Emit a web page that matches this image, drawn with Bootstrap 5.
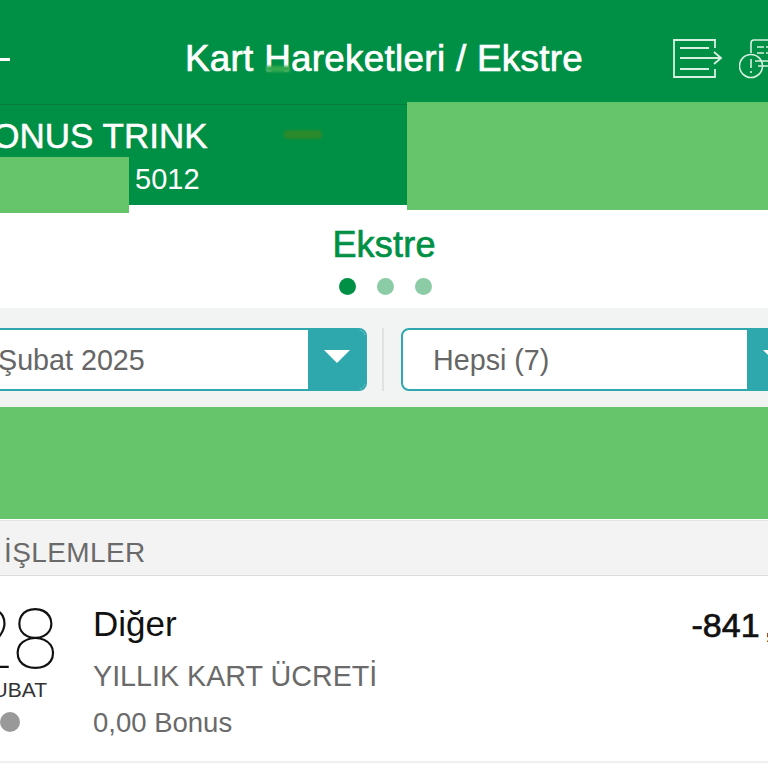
<!DOCTYPE html>
<html lang="tr">
<head>
<meta charset="utf-8">
<title>Kart Hareketleri / Ekstre</title>
<link href="https://cdn.jsdelivr.net/npm/bootstrap@5.3.0/dist/css/bootstrap.min.css" rel="stylesheet">
<style>
html,body{margin:0;height:768px;overflow:hidden;background:#fff;}
body{font-family:"Liberation Sans",Arial,sans-serif;color:#666;position:relative;width:768px;}
.topbar{height:105px;background:#009045;color:#fff;border-bottom:1px solid #0a7a3d;display:grid;grid-template-columns:1fr auto 1fr;align-items:center;padding-top:15px;}
.back-bar{width:10px;height:3px;background:#fff;display:block;}
.page-title{font-size:36.8px;line-height:1;-webkit-text-stroke:.7px #fff;letter-spacing:.3px;}
.top-icons{justify-content:flex-end;gap:16px;overflow:hidden;margin-top:-2px;}
.top-icons svg{flex:none;display:block;}
.cardband{height:100px;background:#009045;color:#fff;overflow:hidden;padding-top:10px;}
.cardname{font-size:35px;line-height:42px;margin-left:-31px;white-space:nowrap;-webkit-text-stroke:.5px #fff;}
.cardno{font-size:29px;line-height:34px;margin-left:135px;margin-top:5px;}
.redact{position:absolute;background:#66c56a;}
.r-a{left:407px;top:102px;width:361px;height:108px;}
.r-b{left:0;top:157px;width:129px;height:56px;}
.smudge{position:absolute;left:284px;top:130px;width:38px;height:9px;background:#2a8a2c;border-radius:4px;filter:blur(1px);}
.smudge-t{position:absolute;left:266px;top:66px;width:24px;height:6px;background:#35a94f;filter:blur(1px);}
.pager{height:103px;background:#fff;}
.pager-title{font-size:36px;line-height:38px;color:#009045;padding-top:21px;-webkit-text-stroke:.7px #009045;height:59px;letter-spacing:.2px;}
.pdots{gap:21px;margin-top:14px;padding-left:3px;}
.pdot{width:17px;height:17px;border-radius:50%;background:#8bcca7;}
.pdot.on{background:#009045;}
.filters{height:99px;background:#f2f3f3;align-items:flex-start;padding-top:20px;}
.picker{height:63px;border:2px solid #2fa8ad;border-radius:8px;background:#fff;overflow:hidden;font-size:28.7px;color:#666;flex:none;}
.p-left{width:368px;margin-left:-1px;border-left:0;border-top-left-radius:0;border-bottom-left-radius:0;}
.p-right{width:405px;}
.p-label{flex:1;padding:2px 0 0 30px;white-space:nowrap;}
.p-left .p-label{padding-left:0;margin-left:-1px;}
.p-caret{width:57px;background:#2fa8ad;flex:none;}
.p-caret i{display:block;width:0;height:0;border-left:13px solid transparent;border-right:13px solid transparent;border-top:13px solid #fff;margin-top:-6px;}
.sepline{width:2px;height:63px;background:#e0e1e2;margin:0 17px 0 15px;flex:none;}
.promo{height:112px;background:#66c56a;}
.sect{height:56px;background:#f3f3f3;border-top:1px solid #e4e4e4;border-bottom:1px solid #dcdcdc;font-size:28px;padding:9px 0 0 4px;letter-spacing:.4px;align-items:center;color:#6a6a6a;margin-top:1px;}
.txrow{height:187px;background:#fff;border-bottom:2px solid #f0f0f0;white-space:nowrap;overflow:hidden;}
.txdate{width:93px;flex:none;position:relative;overflow:hidden;}
.day{font-family:Roboto,"Liberation Sans",sans-serif;font-weight:100;font-size:83px;line-height:76px;color:#111;margin-top:26px;margin-right:35px;text-align:right;margin-left:-70px;}
.mon{font-size:21px;line-height:24px;color:#333;text-align:right;margin-right:46px;margin-left:-60px;}
.gdot{width:20px;height:20px;border-radius:50%;background:#999;margin-top:10px;}
.txmain{flex:1;padding-top:28px;}
.t1{font-size:35px;line-height:40px;color:#111;}
.t2{font-size:28.7px;line-height:32px;margin-top:16px;color:#6a6a6a;}
.t3{font-size:27.5px;line-height:30px;margin-top:16px;color:#6a6a6a;}
.amount{font-size:34px;line-height:40px;color:#111;-webkit-text-stroke:.7px #111;padding-top:29px;margin-right:-6px;flex:none;}
.amount span{margin-left:5px;}
</style>
</head>
<body>
<header class="topbar">
  <div><span class="back-bar"></span></div>
  <div class="page-title">Kart Hareketleri / Ekstre</div>
  <div class="top-icons d-flex align-items-center">
    <svg width="50" height="40" viewBox="0 0 50 40" fill="none" stroke="#d8f0e1" stroke-width="1.8"><path d="M42 9V1H1V38H42V30"/><path d="M7 9H36M7 19H47M7 30H36"/><path d="M41 13L48 19L41 25"/></svg>
    <svg width="29" height="40" viewBox="0 0 29 40" fill="none" stroke="#d8f0e1" stroke-width="1.6"><path d="M12 14V4Q12 1 15 1H29M16 22H29M19 27H29"/><path d="M18 8H29M18 14H29" stroke-dasharray="7 2"/><circle cx="12" cy="27" r="11.5"/><path d="M12 20V29M12 32V34"/></svg>
  </div>
</header>
<section class="cardband">
  <div class="cardname">BONUS TRINK</div>
  <div class="cardno">5012</div>
</section>
<div class="redact r-a"></div>
<div class="redact r-b"></div>
<div class="smudge"></div>
<div class="smudge-t"></div>
<section class="pager text-center">
  <div class="pager-title">Ekstre</div>
  <div class="pdots d-flex justify-content-center"><span class="pdot on"></span><span class="pdot"></span><span class="pdot"></span></div>
</section>
<section class="filters d-flex">
  <div class="picker p-left d-flex align-items-center"><span class="p-label">Şubat 2025</span><span class="p-caret h-100 d-flex align-items-center justify-content-center"><i></i></span></div>
  <span class="sepline"></span>
  <div class="picker p-right d-flex align-items-center"><span class="p-label">Hepsi (7)</span><span class="p-caret h-100 d-flex align-items-center justify-content-center"><i></i></span></div>
</section>
<section class="promo"></section>
<div class="sect d-flex">İŞLEMLER</div>
<section class="txrow d-flex">
  <div class="txdate">
    <div class="day">28</div>
    <div class="mon">ŞUBAT</div>
    <div class="gdot"></div>
  </div>
  <div class="txmain">
    <div class="t1">Diğer</div>
    <div class="t2">YILLIK KART ÜCRETİ</div>
    <div class="t3">0,00 Bonus</div>
  </div>
  <div class="amount">-841<span>,</span></div>
</section>
<script src="https://cdn.jsdelivr.net/npm/bootstrap@5.3.0/dist/js/bootstrap.bundle.min.js"></script>
</body>
</html>
